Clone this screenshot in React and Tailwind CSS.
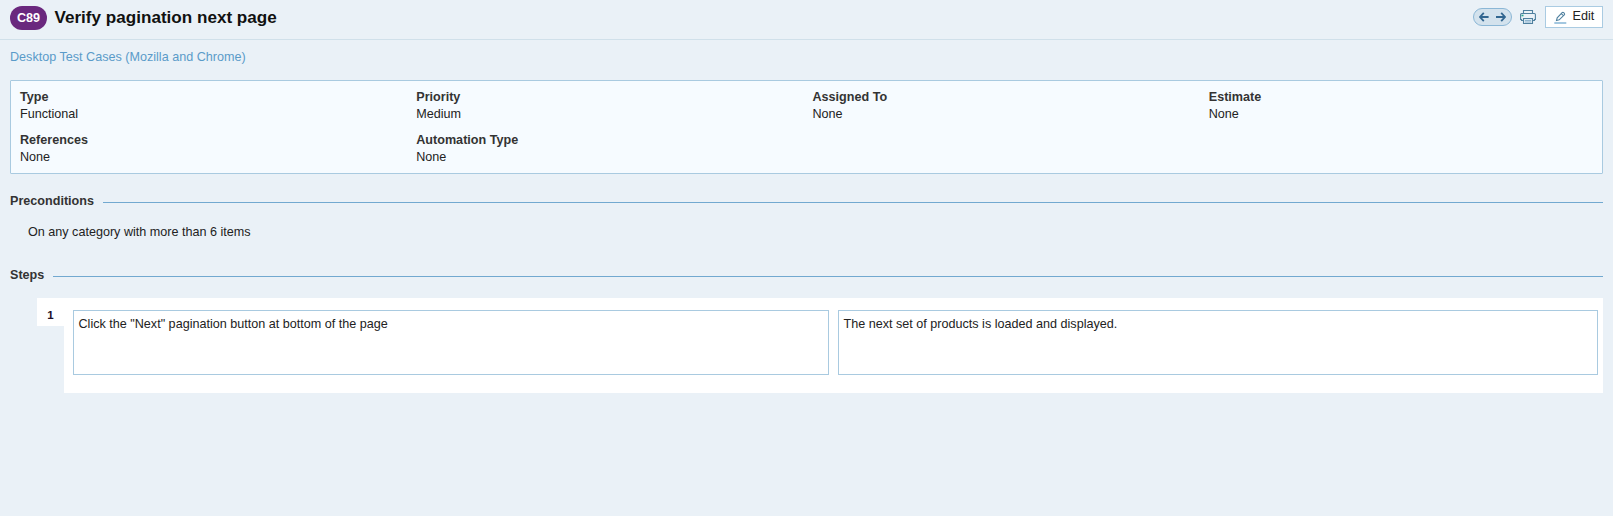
import React from "react";

const fields = [
  ["Type", "Functional"],
  ["Priority", "Medium"],
  ["Assigned To", "None"],
  ["Estimate", "None"],
  ["References", "None"],
  ["Automation Type", "None"],
];

function SectionTitle({ children }) {
  return (
    <div className="flex h-4 items-center">
      <h2 className="text-[12.6px] leading-4 font-bold text-[#333]">{children}</h2>
      <div className="mt-[2px] ml-[9px] h-px flex-1 bg-[#72a9d0]" />
    </div>
  );
}

function NavArrows() {
  return (
    <div className="flex h-[18px] w-[39px] items-center justify-center gap-[7px] rounded-full border border-[#8bb7d6] bg-[#d3e2ed]">
      <svg width="10" height="10" viewBox="0 0 10 10" fill="none" stroke="#326690" strokeWidth="1.8">
        <path d="M4.8 0.8L1 5L4.8 9.2M1 5H9.6" />
      </svg>
      <svg width="10" height="10" viewBox="0 0 10 10" fill="none" stroke="#326690" strokeWidth="1.8">
        <path d="M5.2 0.8L9 5L5.2 9.2M9 5H0" />
      </svg>
    </div>
  );
}

function PrintIcon() {
  return (
    <svg width="16" height="16" viewBox="0 0 16 16" fill="none" stroke="#4f809f" strokeWidth="1.1">
      <path d="M3.5 4.5V1.5H12.5V4.5" />
      <path d="M3.5 11.5H1.5V10.5H0.6V5.5Q0.6 4.5 1.6 4.5H14.4Q15.4 4.5 15.4 5.5V10.5H14.5V11.5H12.5" />
      <path d="M3.5 9.5H12.5V14.5H3.5Z" fill="#dce9f2" />
      <path d="M5 11.5H11M5 13H11" stroke="#8fb5cf" />
      <path d="M1.5 6.5H3.5" stroke="#27a58c" strokeWidth="1.6" />
    </svg>
  );
}

function EditIcon() {
  return (
    <svg width="13" height="13" viewBox="0 0 13 13" fill="none" stroke="#4f809f" strokeWidth="1.1">
      <path d="M2.5 9.5L3.2 6.8L8.1 1.7Q8.9 1 9.7 1.7L10.3 2.3Q11 3.1 10.3 3.8L5.2 8.8L2.5 9.5ZM7.3 2.6L9.4 4.6" />
      <path d="M0.3 12H12.3" stroke="#72a9d0" strokeWidth="1.3" />
    </svg>
  );
}

export default function App() {
  return (
    <main className="min-h-screen bg-[#eaf1f7] font-['Liberation_Sans',Arial,sans-serif] text-[12.6px] leading-[17px] text-[#222]">
      <header className="flex h-10 justify-between border-b border-[#d0e0ea] px-[10px] pt-[6px]">
        <div className="flex h-6 items-center">
          <span className="flex h-6 w-[37px] items-center justify-center rounded-full bg-[#6a287e] pt-px text-[12.6px] font-bold text-white">
            C89
          </span>
          <h1 className="ml-[7.5px] text-[17.1px] leading-6 font-bold text-[#111]">Verify pagination next page</h1>
        </div>
        <div className="flex h-[22px] items-center">
          <NavArrows />
          <div className="ml-2">
            <PrintIcon />
          </div>
          <button className="ml-[9px] flex h-[22px] w-[58px] items-center border border-[#aacbe2] bg-white pl-[7.5px] leading-4">
            <EditIcon />
            <span className="mb-[2px] ml-[6px]">Edit</span>
          </button>
        </div>
      </header>

      <div className="px-[10px]">
        <a className="block pt-[9px] text-[#5a9bc9]">Desktop Test Cases (Mozilla and Chrome)</a>

        <section className="mt-[14px] grid h-[94px] grid-cols-[repeat(4,396.25px)] content-start gap-y-[9px] overflow-hidden rounded-[1px] border border-[#a9cae0] bg-[#f6fbff] pt-2 pl-[9px]">
          {fields.map(([label, value]) => (
            <dl key={label}>
              <dt className="font-bold text-[#333]">{label}</dt>
              <dd>{value}</dd>
            </dl>
          ))}
        </section>

        <section className="mt-[19px]">
          <SectionTitle>Preconditions</SectionTitle>
          <p className="mt-[15px] ml-[18px]">On any category with more than 6 items</p>
        </section>

        <section className="mt-[26px]">
          <SectionTitle>Steps</SectionTitle>
          <div className="mt-[15px] ml-[27px] flex items-start">
            <div className="flex h-7 w-[27px] items-center justify-center bg-white pt-[6px] text-[11.5px] font-bold text-[#201028]">
              1
            </div>
            <div className="flex h-[95px] flex-1 gap-[9px] bg-white pt-3 pr-[5px] pl-[9px]">
              <div className="h-[65px] w-[756px] border border-[#a9cae0] px-[4.5px] pt-[5px]">
                Click the "Next" pagination button at bottom of the page
              </div>
              <div className="h-[65px] flex-1 border border-[#a9cae0] px-[4.5px] pt-[5px]">
                The next set of products is loaded and displayed.
              </div>
            </div>
          </div>
        </section>
      </div>
    </main>
  );
}
